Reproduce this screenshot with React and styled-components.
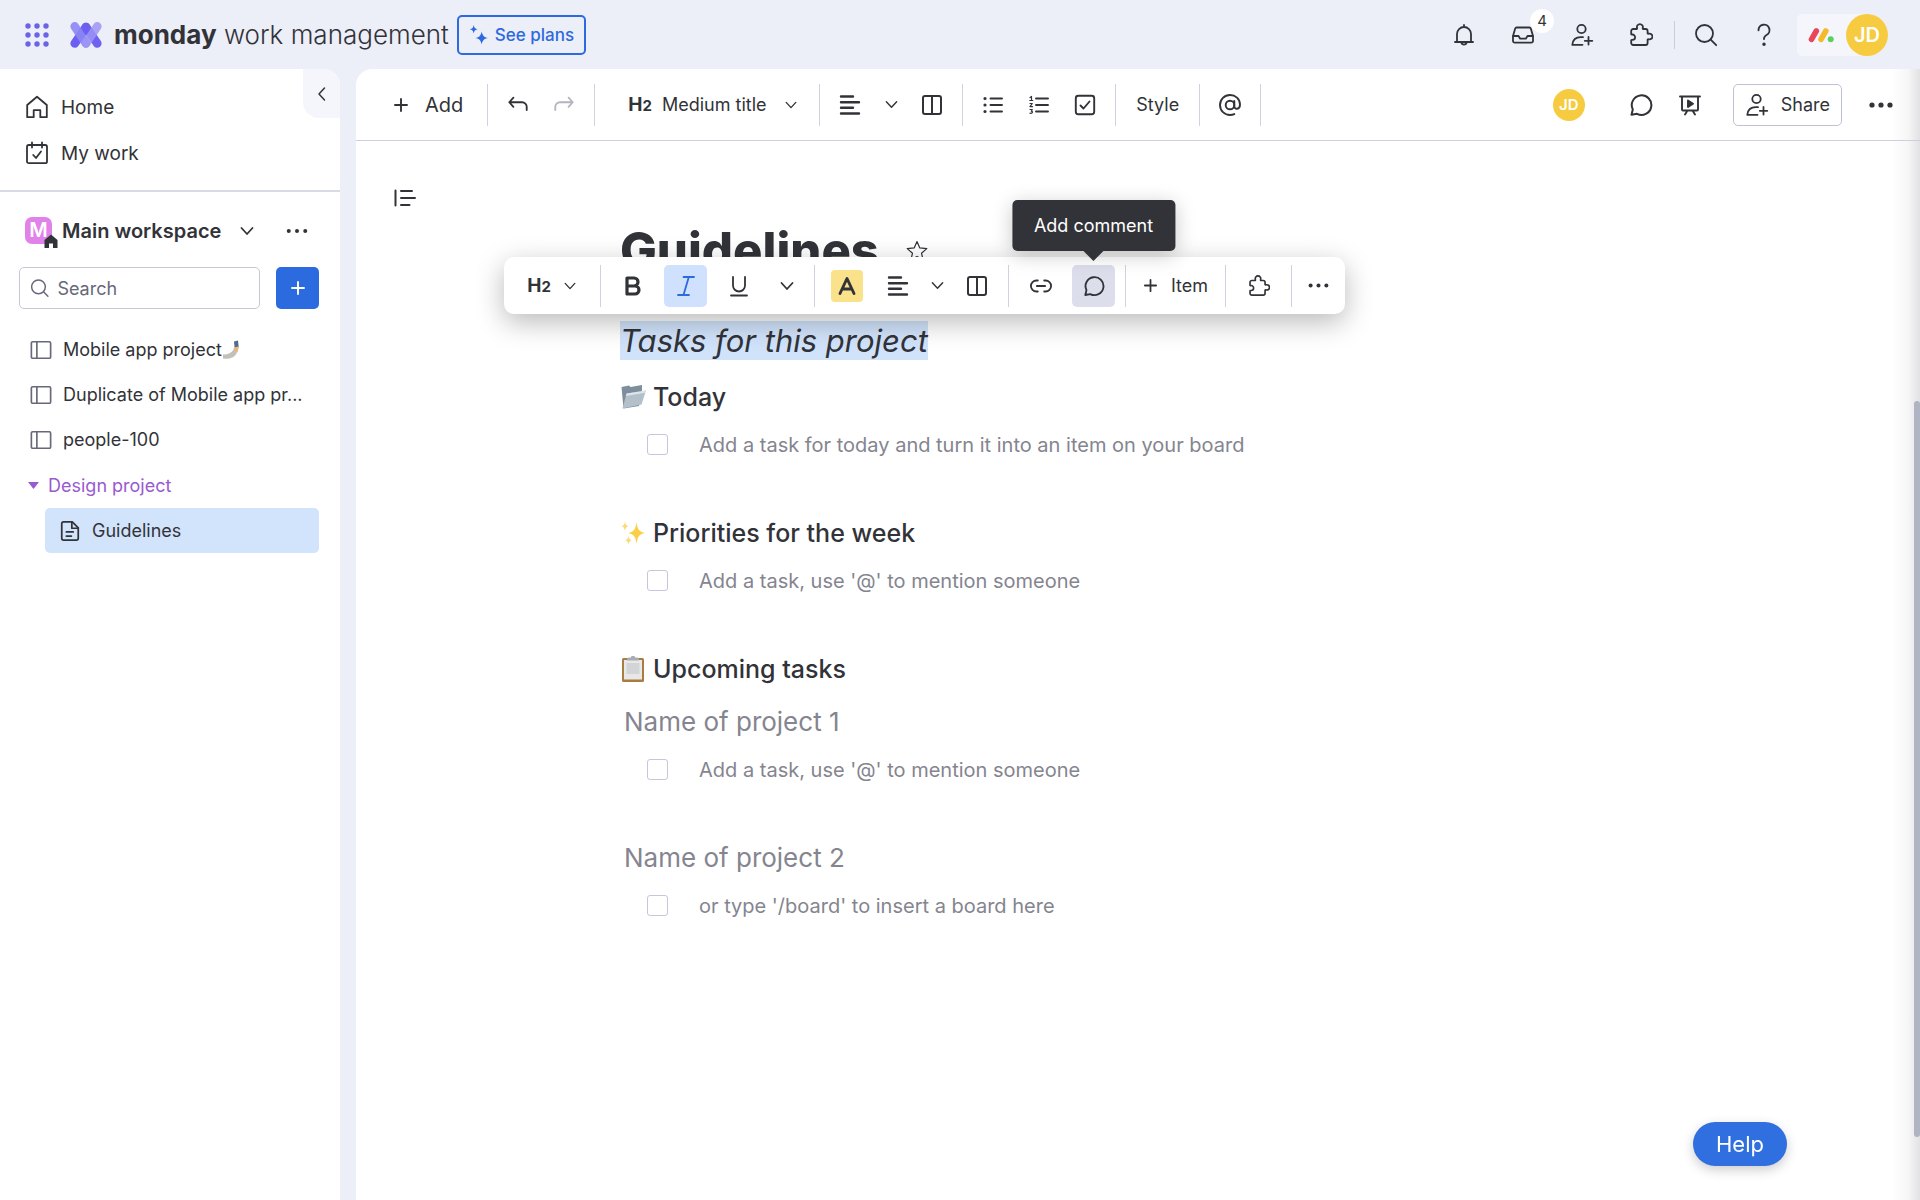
import React, { useState } from 'react'
import styled, { createGlobalStyle } from 'styled-components'

const GlobalStyle = createGlobalStyle`
  * {
    box-sizing: border-box;
  }
  body {
    margin: 0;
    background: #eceef8;
    color: #323338;
    font-family: Inter, "Open Sans", sans-serif;
    font-size: 18px;
  }
  button, input, select {
    font: inherit;
    color: inherit;
  }
`

/* ---------- icons ---------- */

const Icon = ({ size = 24, stroke = 1.6, box = 24, children }) => (
  <svg width={size} height={size} viewBox={`0 0 ${box} ${box}`} fill="none" stroke="currentColor"
    strokeWidth={stroke} strokeLinecap="round" strokeLinejoin="round" aria-hidden="true">
    {children}
  </svg>
)

const BellIcon = () => (
  <Icon stroke={1.8}><path d="M12 2v1.6M3 19h18M5 19v-8a7 7 0 0 1 14 0v8M9.3 19.6a2.8 2.8 0 0 0 5.4 0" /></Icon>
)
const InboxIcon = () => (
  <Icon stroke={1.8}>
    <path d="M5.6 4.5h12.8a1.5 1.5 0 0 1 1.4 1l2.2 7.4v5a1.8 1.8 0 0 1-1.8 1.8H3.800A1.800 1.800 0 0 1 2 17.900V12.900l2.200-7.400a1.500 1.500 0 0 1 1.400-1z" />
    <path d="M2.200 13h5.300l1.700 2.700h5.600l1.700-2.700h5.300" />
  </Icon>
)
const PersonAddIcon = () => (
  <Icon stroke={1.8}>
    <circle cx="11.500" cy="6" r="4.200" />
    <path d="M13 14.200h-2.200C6 14.200 2.800 17 2.300 21.800h10.200M18.500 14v7.500M14.800 17.800h7.500" />
  </Icon>
)
const PuzzleIcon = ({ size }) => (
  <Icon size={size} stroke={1.8}>
    <path d="M2.200 8a2 2 0 0 1 2-2h3.600c.5-.3.300-.7.200-1.200a3 3 0 1 1 5.800 0c-.1.500-.3.900.2 1.200h2.600a2 2 0 0 1 2 2v2.500c.3.400.700.300 1.200.200a2.900 2.900 0 1 1 0 5.600c-.5-.1-.9-.2-1.200.2V20a2 2 0 0 1-2 2H4.200a2 2 0 0 1-2-2v-2.800c.3-.5.800-.3 1.200-.3a2.700 2.700 0 1 0 0-5.400c-.5 0-.9.200-1.200-.3z" />
  </Icon>
)
const SearchIcon = ({ size, stroke = 1.8 }) => (
  <Icon size={size} stroke={stroke}><circle cx="10.500" cy="10.500" r="8.500" /><path d="m16.700 16.700 5.500 5.500" /></Icon>
)
const HelpIcon = () => (
  <Icon stroke={1.9}>
    <path d="M6.500 7.300a5.500 5.500 0 1 1 8 4.700c-1.600.9-2.500 1.700-2.500 3.500v.6" />
    <circle cx="12" cy="21.300" r=".8" fill="currentColor" />
  </Icon>
)
const AppsIcon = () => (
  <svg width="26" height="28" viewBox="0 0 26 28" fill="#6b63e6" aria-hidden="true">
    {[5, 14, 23].map((y) => [4, 13, 22].map((x) => <circle key={x + '-' + y} cx={x} cy={y} r="2.700" />))}
  </svg>
)
const ProductLogo = () => (
  <svg width="32" height="28" viewBox="0 0 32 28" fill="none" strokeLinecap="round" strokeWidth="8.600" aria-hidden="true">
    <path d="m16 6 11.300 16.500" stroke="#6f62f2" />
    <path d="M4.700 22.500 16 6" stroke="#6c5ef1" />
    <path d="M4.700 5.300 16 22.500" stroke="#8d86f4" strokeOpacity=".9" />
    <path d="M16 22.500 27.300 5.300" stroke="#9d94f7" strokeOpacity=".85" />
  </svg>
)
const MondayMark = () => (
  <svg width="26" height="16" viewBox="0 0 26 16" fill="none" strokeLinecap="round" strokeWidth="5.600" aria-hidden="true">
    <path d="m3.500 12.300 4.800-8.300" stroke="#e8465c" />
    <path d="m13 12.300 4.800-8.300" stroke="#f5b92e" />
    <circle cx="22.700" cy="12.300" r="3" fill="#5ad15e" />
  </svg>
)
const SparkleIcon = () => (
  <svg width="20" height="22" viewBox="0 0 20 22" fill="#2c6adf" aria-hidden="true">
    <path d="M12.700 7.500c.8 4.100 2.200 5.600 6.300 6.500-4.100.9-5.500 2.400-6.300 6.500-.8-4.100-2.200-5.600-6.300-6.500 4.100-.9 5.500-2.400 6.300-6.500z" />
    <path d="M4.700 1c.5 2.700 1.400 3.600 4 4.200-2.600.6-3.500 1.500-4 4.200-.5-2.700-1.400-3.600-4-4.200 2.600-.6 3.500-1.500 4-4.200z" />
  </svg>
)
const HomeIcon = () => (
  <Icon stroke={1.8}><path d="M2.200 10 12 1.800 21.800 10v12.200h-6.500v-7H8.700v7H2.200z" /></Icon>
)
const MyWorkIcon = () => (
  <Icon stroke={1.8}>
    <rect x="2" y="4" width="20" height="18.200" rx="1.800" />
    <path d="M7 1.500v5M17 1.500v5M8.200 14l2.800 3 5-6.500" />
  </Icon>
)
const ChevronDown = ({ size = 16, stroke = 1.8 }) => (
  <Icon size={size} box={16} stroke={stroke}><path d="m2.500 5 5.500 6 5.500-6" /></Icon>
)
const ChevronLeft = () => (
  <Icon size={16} box={16} stroke={1.500}><path d="M10.500 2 5 8l5.500 6" /></Icon>
)
const DotsIcon = ({ size = 24, r = 1.9 }) => (
  <svg width={size} height={size} viewBox="0 0 24 24" fill="currentColor" aria-hidden="true">
    <circle cx="3" cy="12" r={r} /><circle cx="12" cy="12" r={r} /><circle cx="21" cy="12" r={r} />
  </svg>
)
const PlusIcon = ({ size = 16, stroke = 1.9 }) => (
  <Icon size={size} box={16} stroke={stroke}><path d="M8 2v12M2 8h12" /></Icon>
)
const BoardIcon = () => (
  <Icon size={22} stroke={1.800}><rect x="1.500" y="3" width="21" height="18" rx="1.500" /><path d="M7.500 3v18" /></Icon>
)
const DocIcon = () => (
  <Icon size={22} stroke={1.900}>
    <path d="M5 2h9.500L21 8.500V20a2 2 0 0 1-2 2H5a2 2 0 0 1-2-2V4a2 2 0 0 1 2-2z" />
    <path d="M14 2.500V9h6.500M8 13h7.500M8 17.500h5.500" />
  </Icon>
)
const UndoIcon = () => (
  <Icon size={22} stroke={2}><path d="M7 4 2.500 9 7 14M2.500 9h14a5 5 0 0 1 5 5v3.500" /></Icon>
)
const RedoIcon = () => (
  <Icon size={22} stroke={2}><path d="m17 4 4.500 5-4.500 5M21.500 9h-14a5 5 0 0 0-5 5v3.500" /></Icon>
)
const AlignIcon = () => (
  <Icon size={22} box={22} stroke={2.400}><path d="M2 2.500h12M2 8.200h18M2 13.800h12M2 19.500h18" /></Icon>
)
const ColumnsIcon = () => (
  <Icon size={22} box={22} stroke={2}><rect x="2" y="2" width="18" height="18" rx="2" /><path d="M11 2v18" /></Icon>
)
const BulletsIcon = () => (
  <Icon size={22} box={22} stroke={1.900}>
    <path d="M8.500 4.500H20M8.500 11H20M8.500 17.500H20" />
    <path d="M3 4.500h.01M3 11h.01M3 17.500h.01" strokeWidth="3.200" />
  </Icon>
)
const NumbersIcon = () => (
  <Icon size={22} box={22} stroke={1.900}>
    <path d="M8 4.500h12M8 11h12M8 17.500h12" />
    <path d="m2 3.500 1.500-1v4M1.800 6.500h3M2 9.500h2.300L2 12.700h2.500M2 15.500h2.300l-1 1.700c2 .2 1.200 2.600-1.300 2" strokeWidth="1.200" />
  </Icon>
)
const CheckBoxIcon = () => (
  <Icon size={22} box={22} stroke={1.900}><rect x="1.800" y="1.800" width="18.400" height="18.400" rx="2.500" /><path d="m6.500 11.500 3 3 6-7" /></Icon>
)
const AtIcon = () => (
  <Icon stroke={1.900}>
    <circle cx="12" cy="12" r="4.300" />
    <path d="M16.300 8v5.200c0 3.800 5.700 3.600 5.700-1.700C21.800 5.800 17.500 2 12 2S2 6.300 2 12s4.500 10 10 10c1.700 0 3-.3 4.300-.9" />
  </Icon>
)
const CommentIcon = ({ size }) => (
  <Icon size={size} stroke={2}><path d="M2.500 21.800 3.800 16.500A9.800 9.800 0 1 1 8 20.800z" /></Icon>
)
const PresentIcon = () => (
  <Icon stroke={1.900}>
    <path d="M2 3.500h20M4 3.500v13a1 1 0 0 0 1 1h14a1 1 0 0 0 1-1v-13M9.500 17.500 7 21.500M14.500 17.500l2.500 4" />
    <path d="m10 7.500 5 3.200-5 3.200z" fill="currentColor" />
  </Icon>
)
const OutlineIcon = () => (
  <Icon size={22} box={22} stroke={2}><path d="M1.500 3.500v15M7 4h11M7 11h14M7 18h8.500" /></Icon>
)
const StarIcon = () => (
  <Icon stroke={1.200}><path d="m12 2.500 2.800 6.400 7 .7-5.300 4.600 1.600 6.800-6.100-3.600L5.900 21l1.600-6.800-5.300-4.600 7-.7z" /></Icon>
)
const BoldIcon = () => (
  <Icon size={22} box={22} stroke={3.200}><path d="M5 3h7a4 4 0 0 1 0 8H5zM5 11h8a4 4 0 0 1 0 8H5z" /></Icon>
)
const ItalicIcon = () => (
  <Icon size={22} box={22} stroke={1.800}><path d="M8.500 2H19M3 20h11M13.800 2l-5.300 18" /></Icon>
)
const UnderlineIcon = () => (
  <Icon size={22} box={22} stroke={1.800}><path d="M5 2v8.500a6 6 0 0 0 12 0V2M3 20.500h16" /></Icon>
)
const HighlightIcon = () => (
  <Icon size={22} box={22} stroke={2.900}><path d="m4 18.500 7-15 7 15M6.500 14h9" /></Icon>
)
const LinkIcon = () => (
  <Icon size={22} stroke={2}><path d="M8.500 18H7A6 6 0 0 1 7 6h1.500M15.500 6H17a6 6 0 0 1 0 12h-1.500M7.500 12h9" /></Icon>
)
const HouseBadgeIcon = () => (
  <svg width="14" height="14" viewBox="0 0 14 14" fill="#323338" aria-hidden="true">
    <path d="M7 .5 13.500 6v8H9V9.500H5V14H.5V6z" />
  </svg>
)
const SelfieIcon = () => (
  <svg width="18" height="20" viewBox="0 0 18 20" aria-hidden="true">
    <path d="M1 14.500c4 .5 7-1 9.500-3.500L13 7l3 1-1.500 5.500C12.500 18 6 19.500 1 18.500z" fill="#c4c0b8" />
    <path d="m11.500 8.500 3-4 2.500 2-1.500 6z" fill="#e8b878" />
    <path d="m12 1.500 4-1 .6 6-4 .8z" fill="#4d6c8c" />
  </svg>
)
const FolderEmoji = () => (
  <svg width="26" height="26" viewBox="0 0 26 26" aria-hidden="true">
    <path d="M1.500 3 9 1.500 10.500 3 22 1v5l-3 16-15.500 2.500z" fill="#7d8e9c" />
    <path d="M6.500 9.500 26 6.500 21.500 20.500 2.500 24.500z" fill="#b3c0ca" />
    <path d="M6.500 9.500 26 6.500l-.8 2.300L6 12z" fill="#dde4ea" />
  </svg>
)
const SparklesEmoji = () => (
  <svg width="26" height="26" viewBox="0 0 26 26" fill="#fbcf45" aria-hidden="true">
    <path d="M16.500 2c1 7.500 2.500 9.800 8.500 11-6 1.200-7.500 3.500-8.500 11-1-7.500-2.500-9.800-8.500-11 6-1.200 7.500-3.500 8.500-11z" />
    <path d="M5 1.500c.5 3 1.200 4 3.500 4.700C6.200 6.900 5.500 8 5 11c-.5-3-1.200-4.100-3.500-4.800C3.800 5.500 4.500 4.500 5 1.500zM8.500 16c.5 2.600 1.200 3.600 3.500 4.200-2.300.7-3 1.800-3.500 4.600-.5-2.800-1.200-3.900-3.500-4.600 2.300-.6 3-1.600 3.500-4.200z" fill="#f6dc7c" />
  </svg>
)
const ClipboardEmoji = () => (
  <svg width="26" height="26" viewBox="0 0 26 26" aria-hidden="true">
    <rect x="2" y="2" width="22" height="24" rx="1.500" fill="#a97c3f" />
    <path d="M4 4h18v19.500H4z" fill="#e8e8ea" />
    <path d="M6.500 7h13v11h-13z" fill="#d3d4d6" />
    <path d="M7 4.500V3a2 2 0 0 1 2-1.500h2a2 2 0 0 1 4 0h2A2 2 0 0 1 19 3v1.500z" fill="#a9adb3" />
  </svg>
)

/* ---------- styled parts ---------- */

const Page = styled.div`
  min-height: 100vh;
  display: flex;
  flex-direction: column;
`

const PlainButton = styled.button`
  display: flex;
  align-items: center;
  justify-content: center;
  padding: 0;
  border: 0;
  background: none;
  cursor: pointer;
`

const Header = styled.header`
  display: flex;
  align-items: center;
  height: 69px;
  padding: 0 32px 0 24px;
`

const Brand = styled.a`
  display: flex;
  align-items: center;
  gap: 12px;
  margin-left: 20px;
  margin-right: 8px;
  color: #323338;
  text-decoration: none;
  font-size: 26px;
  font-weight: 300;
  white-space: nowrap;
  b {
    font-weight: 700;
  }
`

const PlansButton = styled(PlainButton)`
  height: 40px;
  padding: 0 10px;
  gap: 6px;
  border: 2px solid #2c6adf;
  border-radius: 5px;
  color: #2c6adf;
  font-size: 17px;
  font-weight: 500;
`

const HeaderActions = styled.div`
  display: flex;
  align-items: center;
  gap: 19px;
  margin-left: auto;
`

const HeaderButton = styled(PlainButton)`
  position: relative;
  width: 40px;
  height: 40px;
`

const Count = styled.span`
  position: absolute;
  top: -6px;
  left: 27px;
  width: 24px;
  height: 24px;
  border-radius: 50%;
  background: #fff;
  font-size: 15px;
  line-height: 24px;
  text-align: center;
`

const SearchHelp = styled.div`
  display: flex;
  gap: 18px;
  margin-left: -6px;
  margin-right: -6px;
  padding-left: 12px;
  background: linear-gradient(#c9ccdc, #c9ccdc) left center / 1px 28px no-repeat;
`

const Profile = styled(PlainButton)`
  height: 42px;
  padding-left: 11px;
  gap: 12px;
  border-radius: 5px 21px 21px 5px;
  background: #f5f6fb;
`

const Avatar = styled.span`
  width: ${(p) => p.$size}px;
  height: ${(p) => p.$size}px;
  border-radius: 50%;
  background: #f7cb40;
  color: #fff;
  font-size: ${(p) => (p.$size > 40 ? 20 : 15)}px;
  font-weight: 600;
  line-height: ${(p) => p.$size}px;
  text-align: center;
`

const Columns = styled.div`
  flex: 1;
  display: grid;
  grid-template-columns: 340px minmax(0, 1fr);
  gap: 16px;
`

const Sidebar = styled.aside`
  border-top-right-radius: 16px;
  background: #fff;
`

const SidebarTop = styled.div`
  display: flex;
  align-items: flex-start;
  height: 123px;
  border-bottom: 2px solid #d8dae6;
`

const MainNav = styled.nav`
  flex: 1;
  padding: 15px 0 0 25px;
`

const NavLink = styled.a`
  display: flex;
  align-items: center;
  gap: 12px;
  height: 46px;
  color: inherit;
  font-size: 19px;
  text-decoration: none;
`

const CollapseButton = styled(PlainButton)`
  width: 37px;
  height: 49px;
  border-radius: 0 16px 0 16px;
  background: #f5f6fb;
`

const WorkspaceRow = styled.div`
  display: flex;
  align-items: center;
  height: 75px;
  padding: 2px 32px 0 25px;
`

const WorkspaceButton = styled(PlainButton)`
  gap: 10px;
  margin-right: auto;
  font-size: 20px;
  font-weight: 600;
  svg {
    display: block;
  }
`

const WorkspaceBadge = styled.span`
  position: relative;
  width: 27px;
  height: 27px;
  border-radius: 7px;
  background: #e182ea;
  color: #fff;
  line-height: 27px;
  text-align: center;
  svg {
    position: absolute;
    right: -6px;
    bottom: -4px;
  }
`

const WorkspaceName = styled.span`
  margin-right: 8px;
`

const SearchRow = styled.div`
  display: flex;
  gap: 16px;
  padding: 0 21px 0 19px;
`

const SearchBox = styled.label`
  flex: 1;
  display: flex;
  align-items: center;
  gap: 8px;
  min-width: 0;
  height: 42px;
  padding-left: 10px;
  border: 1px solid #c5c7d8;
  border-radius: 5px;
  color: #676879;
  input {
    width: 100%;
    min-width: 0;
    padding: 0;
    border: 0;
    outline: 0;
    background: none;
  }
  input::placeholder {
    color: #676879;
    opacity: 1;
  }
`

const NewButton = styled(PlainButton)`
  width: 43px;
  height: 42px;
  border-radius: 5px;
  background: #2c6adf;
  color: #fff;
`

const BoardList = styled.nav`
  padding: 18px 21px 0 28px;
`

const BoardLink = styled.a`
  display: flex;
  align-items: center;
  gap: 11px;
  height: 45px;
  padding-left: 2px;
  color: inherit;
  text-decoration: none;
  white-space: nowrap;
  svg {
    flex: none;
    color: #676879;
  }
`

const BoardName = styled.span`
  display: flex;
  align-items: center;
`

const FolderButton = styled(PlainButton)`
  gap: 9px;
  height: 46px;
  color: #9a5ad0;
`

const SelectedDoc = styled(BoardLink)`
  margin-left: 17px;
  padding-left: 14px;
  border-radius: 5px;
  background: #d2e3fc;
  svg {
    color: #323338;
  }
`

const Main = styled.main`
  position: relative;
  border-top-left-radius: 16px;
  background: linear-gradient(to left, #e2e2e4, #f6f6f7 12px, #fff 28px);
`

const DocToolbar = styled.div`
  display: flex;
  align-items: center;
  height: 72px;
  padding-left: 13px;
  border-bottom: 1px solid #cdcfe0;
`

const Group = styled.div`
  display: flex;
  align-items: center;
  justify-content: center;
  gap: ${(p) => p.$gap || 0}px;
  height: 42px;
  padding: 0 ${(p) => p.$pad}px;
  border-right: ${(p) => (p.$open ? '0' : '1px solid #d0d1e2')};
`

const ToolButton = styled(PlainButton)`
  position: relative;
  width: ${(p) => (p.$narrow ? 36 : 46)}px;
  height: 42px;
  border-radius: 5px;
  &:disabled {
    color: #b4b5be;
  }
`

const AddButton = styled(PlainButton)`
  gap: 16px;
  font-size: 20px;
`

const TextStyle = styled.label`
  display: flex;
  align-items: center;
  gap: 10px;
  width: 210px;
  padding-left: 26px;
  select {
    appearance: none;
    flex: 1;
    min-width: 0;
    padding: 0;
    border: 0;
    outline: 0;
    background: none;
  }
  svg {
    margin-right: 14px;
  }
`

const HeadingMark = styled.span`
  font-size: 19px;
  font-weight: 700;
  small {
    font-size: 15px;
  }
`

const ToolbarEnd = styled.div`
  display: flex;
  align-items: center;
  gap: 3px;
  margin-left: auto;
  padding-right: 16px;
`

const ShareButton = styled(PlainButton)`
  height: 42px;
  margin: 0 13px 0 17px;
  padding: 0 11px;
  gap: 12px;
  border: 1px solid #bfc1d6;
  border-radius: 5px;
`

const Viewers = styled.div`
  margin-right: 30px;
`

const DocBody = styled.div`
  display: grid;
  grid-template-columns: 1fr minmax(0, 1036px) 1fr;
`

const OutlineButton = styled(PlainButton)`
  justify-self: start;
  margin: 46px 0 0 38px;
  height: 22px;
`

const Doc = styled.article`
  position: relative;
  padding-top: 70px;
`

const TitleRow = styled.div`
  display: flex;
  align-items: center;
  gap: 26px;
  height: 80px;
`

const Title = styled.h1`
  margin: 0;
  font-size: 49px;
  font-weight: 800;
  line-height: 80px;
`

const Subtitle = styled.h2`
  height: 53px;
  margin: 30px 0 -4px;
  font-size: 31px;
  font-weight: 400;
  font-style: italic;
  line-height: 39px;
  mark {
    display: inline-block;
    background: #d1e3fb;
    color: inherit;
  }
`

const Heading = styled.h3`
  display: flex;
  align-items: center;
  gap: 7px;
  height: 53px;
  margin: 0;
  padding-left: ${(p) => (p.$muted ? 4 : 0)}px;
  color: ${(p) => (p.$muted ? '#84858f' : '#323338')};
  font-size: ${(p) => (p.$muted ? 26 : 25)}px;
  font-weight: ${(p) => (p.$muted ? 400 : 500)};
`

const Task = styled.label`
  display: flex;
  align-items: center;
  gap: 31px;
  height: 43px;
  margin-bottom: 40px;
  padding-left: 27px;
  color: #84858f;
  font-size: 20px;
  input {
    appearance: none;
    width: 21px;
    height: 21px;
    margin: 0;
    border: 1px solid #c5c7dc;
    border-radius: 3px;
    background: #fff;
  }
  input:checked {
    background: #2c6adf;
  }
`

const FloatingBar = styled.div`
  position: absolute;
  top: 116px;
  left: -116px;
  z-index: 2;
  display: flex;
  align-items: center;
  height: 57px;
  border-radius: 10px;
  background: #fff;
  box-shadow: 0 8px 28px rgba(0, 0, 0, 0.28);
`

const BarButton = styled(ToolButton)`
  gap: 12px;
  width: ${(p) => p.$width || 43}px;
  background: ${(p) => p.$fill || 'none'};
  color: ${(p) => p.$color || 'inherit'};
`

const Highlighter = styled.span`
  display: flex;
  align-items: center;
  justify-content: center;
  width: 32px;
  height: 32px;
  border-radius: 4px;
  background: #f9e28a;
`

const Tooltip = styled.span`
  position: absolute;
  bottom: 56px;
  left: 50%;
  transform: translateX(-50%);
  padding: 0 22px;
  border-radius: 5px;
  background: #323338;
  box-shadow: 0 4px 20px rgba(0, 0, 0, 0.22);
  color: #fff;
  line-height: 51px;
  white-space: nowrap;
  &::after {
    content: '';
    position: absolute;
    top: 100%;
    left: 50%;
    margin-left: -10px;
    border: 10px solid transparent;
    border-top-color: #323338;
    border-bottom: 0;
  }
`

const ScrollThumb = styled.div`
  position: absolute;
  top: 332px;
  right: 0;
  bottom: 63px;
  width: 6px;
  border-radius: 3px;
  background: #b0b3c2;
`

const HelpButton = styled(PlainButton)`
  position: fixed;
  right: 133px;
  bottom: 34px;
  height: 44px;
  padding: 0 23px;
  border-radius: 22px;
  background: #2f6fe0;
  box-shadow: 0 4px 12px rgba(0, 0, 0, 0.2);
  color: #fff;
  font-size: 22px;
`

/* ---------- data ---------- */

const boards = [
  { name: 'Mobile app project', emoji: <SelfieIcon /> },
  { name: 'Duplicate of Mobile app pr...' },
  { name: 'people-100' },
]

const sections = [
  { title: 'Today', emoji: <FolderEmoji />, task: 'Add a task for today and turn it into an item on your board' },
  { title: 'Priorities for the week', emoji: <SparklesEmoji />, task: "Add a task, use '@' to mention someone" },
  { title: 'Upcoming tasks', emoji: <ClipboardEmoji /> },
  { title: 'Name of project 1', muted: true, task: "Add a task, use '@' to mention someone" },
  { title: 'Name of project 2', muted: true, task: "or type '/board' to insert a board here" },
]

/* ---------- page ---------- */

const TopBar = () => (
  <Header>
    <PlainButton aria-label="Apps"><AppsIcon /></PlainButton>
    <Brand href="#">
      <ProductLogo />
      <span><b>monday</b> work management</span>
    </Brand>
    <PlansButton><SparkleIcon />See plans</PlansButton>
    <HeaderActions>
      <HeaderButton aria-label="Notifications"><BellIcon /></HeaderButton>
      <HeaderButton aria-label="Inbox"><InboxIcon /><Count>4</Count></HeaderButton>
      <HeaderButton aria-label="Invite members"><PersonAddIcon /></HeaderButton>
      <HeaderButton aria-label="Apps marketplace"><PuzzleIcon /></HeaderButton>
      <SearchHelp>
        <HeaderButton aria-label="Search everything"><SearchIcon /></HeaderButton>
        <HeaderButton aria-label="Help"><HelpIcon /></HeaderButton>
      </SearchHelp>
      <Profile aria-label="Profile"><MondayMark /><Avatar $size={42}>JD</Avatar></Profile>
    </HeaderActions>
  </Header>
)

const SideMenu = () => {
  const [open, setOpen] = useState(true)
  return (
    <Sidebar>
      <SidebarTop>
        <MainNav>
          <NavLink href="#"><HomeIcon />Home</NavLink>
          <NavLink href="#"><MyWorkIcon />My work</NavLink>
        </MainNav>
        <CollapseButton aria-label="Collapse"><ChevronLeft /></CollapseButton>
      </SidebarTop>
      <WorkspaceRow>
        <WorkspaceButton>
          <WorkspaceBadge>M<HouseBadgeIcon /></WorkspaceBadge>
          <WorkspaceName>Main workspace</WorkspaceName>
          <ChevronDown />
        </WorkspaceButton>
        <PlainButton aria-label="Workspace options"><DotsIcon size={22} r={2.200} /></PlainButton>
      </WorkspaceRow>
      <SearchRow>
        <SearchBox>
          <SearchIcon size={22} />
          <input type="text" placeholder="Search" aria-label="Search" />
        </SearchBox>
        <NewButton aria-label="New item"><PlusIcon /></NewButton>
      </SearchRow>
      <BoardList>
        {boards.map((board) => (
          <BoardLink href="#" key={board.name}>
            <BoardIcon />
            <BoardName>{board.name}{board.emoji}</BoardName>
          </BoardLink>
        ))}
        <FolderButton onClick={() => setOpen(!open)}>
          <svg width="11" height="7" viewBox="0 0 11 7" fill="currentColor" aria-hidden="true"><path d="M0 0h11L5.500 7z" /></svg>
          Design project
        </FolderButton>
        {open && <SelectedDoc href="#"><DocIcon />Guidelines</SelectedDoc>}
      </BoardList>
    </Sidebar>
  )
}

const Toolbar = () => (
  <DocToolbar>
    <Group $pad={24}>
      <AddButton><PlusIcon />Add</AddButton>
    </Group>
    <Group $pad={7}>
      <ToolButton aria-label="Undo"><UndoIcon /></ToolButton>
      <ToolButton aria-label="Redo" disabled><RedoIcon /></ToolButton>
    </Group>
    <Group $pad={7}>
      <TextStyle>
        <HeadingMark>H<small>2</small></HeadingMark>
        <select aria-label="Text style">
          <option>Medium title</option>
          <option>Small title</option>
          <option>Normal text</option>
        </select>
        <ChevronDown size={14} stroke={1.500} />
      </TextStyle>
    </Group>
    <Group $pad={7}>
      <ToolButton aria-label="Align"><AlignIcon /></ToolButton>
      <ToolButton aria-label="Align options" $narrow><ChevronDown size={15} stroke={1.500} /></ToolButton>
      <ToolButton aria-label="Columns"><ColumnsIcon /></ToolButton>
    </Group>
    <Group $pad={7}>
      <ToolButton aria-label="Bulleted list"><BulletsIcon /></ToolButton>
      <ToolButton aria-label="Numbered list"><NumbersIcon /></ToolButton>
      <ToolButton aria-label="Check list"><CheckBoxIcon /></ToolButton>
    </Group>
    <Group $pad={20}>
      <PlainButton>Style</PlainButton>
    </Group>
    <Group $pad={7}>
      <ToolButton aria-label="Mention"><AtIcon /></ToolButton>
    </Group>
    <ToolbarEnd>
      <Viewers><Avatar as="div" $size={32}>JD</Avatar></Viewers>
      <ToolButton aria-label="Comments"><CommentIcon /></ToolButton>
      <ToolButton aria-label="Present"><PresentIcon /></ToolButton>
      <ShareButton><PersonAddIcon />Share</ShareButton>
      <ToolButton aria-label="More"><DotsIcon r={2.600} /></ToolButton>
    </ToolbarEnd>
  </DocToolbar>
)

const FormatBar = () => (
  <FloatingBar role="toolbar">
    <Group $pad={20}>
      <BarButton aria-label="Text style" $width={56}>
        <HeadingMark>H<small>2</small></HeadingMark>
        <ChevronDown size={14} stroke={1.500} />
      </BarButton>
    </Group>
    <Group $pad={10} $gap={10}>
      <BarButton aria-label="Bold"><BoldIcon /></BarButton>
      <BarButton aria-label="Italic" $fill="#cfe1fd" $color="#2c6adf"><ItalicIcon /></BarButton>
      <BarButton aria-label="Underline"><UnderlineIcon /></BarButton>
      <BarButton aria-label="More styles" $width={34}><ChevronDown /></BarButton>
    </Group>
    <Group $pad={10} $gap={8}>
      <BarButton aria-label="Highlight"><Highlighter><HighlightIcon /></Highlighter></BarButton>
      <BarButton aria-label="Align"><AlignIcon /></BarButton>
      <BarButton aria-label="Align options" $width={20}><ChevronDown size={15} stroke={1.500} /></BarButton>
      <BarButton aria-label="Columns"><ColumnsIcon /></BarButton>
    </Group>
    <Group $pad={10} $gap={10}>
      <BarButton aria-label="Link"><LinkIcon /></BarButton>
      <BarButton $fill="#dcdeec" aria-label="Add comment">
        <CommentIcon size={22} />
        <Tooltip role="tooltip">Add comment</Tooltip>
      </BarButton>
    </Group>
    <Group $pad={17} $gap={13}>
      <PlusIcon size={15} />
      <PlainButton>Item</PlainButton>
    </Group>
    <Group $pad={11}>
      <BarButton aria-label="Apps"><PuzzleIcon size={22} /></BarButton>
    </Group>
    <Group $pad={5} $open>
      <BarButton aria-label="More"><DotsIcon size={21} r={2.300} /></BarButton>
    </Group>
  </FloatingBar>
)

const App = () => (
  <>
    <GlobalStyle />
    <Page>
      <TopBar />
      <Columns>
        <SideMenu />
        <Main>
          <Toolbar />
          <DocBody>
            <OutlineButton aria-label="Outline"><OutlineIcon /></OutlineButton>
            <Doc>
              <TitleRow>
                <Title>Guidelines</Title>
                <PlainButton aria-label="Favorite"><StarIcon /></PlainButton>
              </TitleRow>
              <Subtitle><mark>Tasks for this project</mark></Subtitle>
              {sections.map((s) => (
                <React.Fragment key={s.title}>
                  <Heading $muted={s.muted}>{s.emoji}{s.title}</Heading>
                  {s.task && <Task><input type="checkbox" />{s.task}</Task>}
                </React.Fragment>
              ))}
              <FormatBar />
            </Doc>
          </DocBody>
          <ScrollThumb />
        </Main>
      </Columns>
    </Page>
    <HelpButton>Help</HelpButton>
  </>
)

export default App
